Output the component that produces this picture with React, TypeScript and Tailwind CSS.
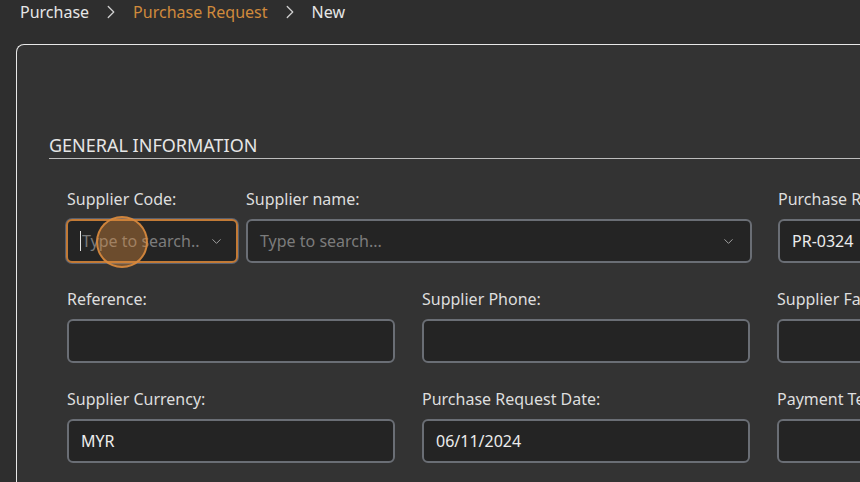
import { ChevronDown, ChevronRight } from 'lucide-react';

type FieldProps = {
    label: string;
    value?: string;
};

function Field({ label, value }: FieldProps) {
    return (
        <div className="flex min-w-0 flex-col">
            <label className="h-[22px] whitespace-nowrap text-[16px] leading-[22px] text-[#dedede]">{label}</label>
            <div className="mt-[9px] flex h-[44px] items-center rounded-[6px] border-2 border-[#6a6e75] bg-[#242424] px-[12px] text-[16px] text-[#ececec]">
                {value}
            </div>
        </div>
    );
}

export default function App() {
    return (
        <div className="h-[482px] w-full overflow-hidden bg-[#2e2e2e]" style={{ fontFamily: '"Noto Sans", "Open Sans", sans-serif' }}>
            <nav className="flex h-[24px] items-center pl-[20px] text-[16px] text-[#e6e6e6]">
                <span>Purchase</span>
                <ChevronRight className="mx-[11px] h-[22px] w-[22px] text-[#cfcfcf]" strokeWidth={1.4} />
                <span className="text-[#d08a3c]">Purchase Request</span>
                <ChevronRight className="mx-[11px] h-[22px] w-[22px] text-[#cfcfcf]" strokeWidth={1.4} />
                <span>New</span>
            </nav>

            <section className="ml-[16px] mt-[20px] h-[500px] w-[900px] rounded-tl-[8px] border-l border-t border-[#e8e8e8] bg-[#333333] pl-[32px] pt-[89px]">
                <h2 className="border-b border-[#bdbdbd] text-[18px] leading-[24px] text-[#e6e6e6]">
                    <span className="relative -top-px">GENERAL INFORMATION</span>
                </h2>

                <div className="grid grid-cols-[328px_328px_328px] gap-x-[27px] gap-y-[25px] pl-[18px] pt-[29px]">
                    <div className="col-span-2 flex w-[685px] gap-[8px]">
                        <div className="flex w-[171px] flex-col">
                            <label className="h-[22px] whitespace-nowrap text-[16px] leading-[22px] text-[#dedede]">Supplier Code:</label>
                            <div className="relative -ml-px mt-[9px] flex h-[44px] items-center rounded-[6px] border-2 border-[#c27a36] bg-[#242424] pl-[12px] pr-[12px] text-[16px] ring-1 ring-[#59606e]">
                                <span className="h-[20px] w-px bg-[#e0e0e0]" />
                                <span className="ml-px flex-1 truncate text-[#7c7c7c]">Type to search..</span>
                                <ChevronDown className="h-[15px] w-[15px] text-[#a0a0a0]" strokeWidth={1.6} />
                                <span className="absolute left-[28px] top-[-5px] h-[52px] w-[52px] rounded-full border-2 border-[#d98a3d]/90 bg-[#d98a3d]/40" />
                            </div>
                        </div>
                        <div className="flex flex-1 flex-col">
                            <label className="h-[22px] text-[16px] leading-[22px] text-[#dedede]">Supplier name:</label>
                            <div className="mt-[9px] flex h-[44px] items-center rounded-[6px] border-2 border-[#6a6e75] bg-[#242424] pl-[12px] pr-[14px] text-[16px]">
                                <span className="flex-1 text-[#7c7c7c]">Type to search...</span>
                                <ChevronDown className="h-[15px] w-[15px] text-[#a0a0a0]" strokeWidth={1.6} />
                            </div>
                        </div>
                    </div>
                    <div className="ml-px">
                        <Field label="Purchase Request No:" value="PR-0324" />
                    </div>

                    <Field label="Reference:" />
                    <Field label="Supplier Phone:" />
                    <Field label="Supplier Fax:" />

                    <Field label="Supplier Currency:" value="MYR" />
                    <Field label="Purchase Request Date:" value="06/11/2024" />
                    <Field label="Payment Terms:" />
                </div>
            </section>
        </div>
    );
}
